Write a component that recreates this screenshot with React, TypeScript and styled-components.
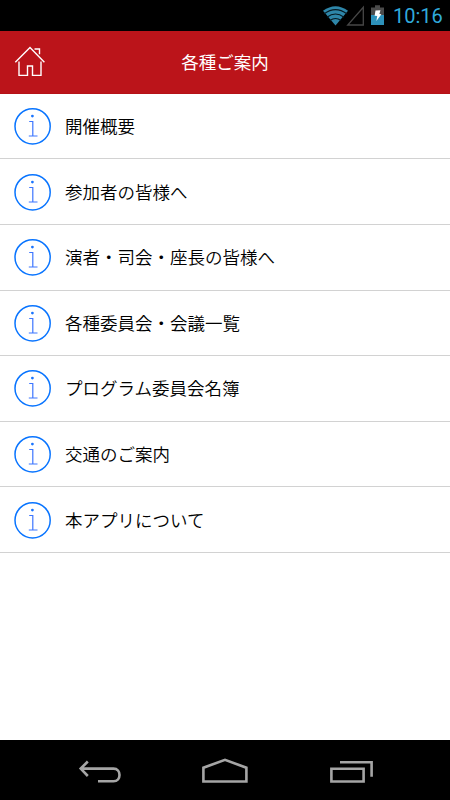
import React from 'react';
import styled, { createGlobalStyle } from 'styled-components';

const GlobalStyle = createGlobalStyle`
  * { box-sizing: border-box; }
  body { margin: 0; background: #fff; }
`;

const Screen = styled.div`
  display: flex;
  flex-direction: column;
  width: 450px;
  height: 800px;
  overflow: hidden;
  background: #fff;
  color: #000;
  font-family: "Noto Sans CJK JP", sans-serif;
`;

const StatusBar = styled.div`
  display: flex;
  flex: none;
  height: 31px;
  justify-content: flex-end;
  padding-right: 7px;
  background: #000;
`;

const Clock = styled.time`
  width: 50px;
  margin-left: 7px;
  padding-top: 1px;
  font: 400 20px/31px Roboto, sans-serif;
  color: #30aadb;
  white-space: nowrap;
`;

const Header = styled.header`
  display: grid;
  grid-template-columns: 60px 1fr 60px;
  align-items: center;
  flex: none;
  height: 62.6px;
  background: #bb141a;
  border-bottom: 1px solid #b51217;
`;

const HomeButton = styled.button`
  display: block;
  width: 60px;
  height: 60px;
  padding: 0;
  border: 0;
  background: none;
`;

const Title = styled.h1`
  margin: 0;
  font-size: 17.5px;
  line-height: 26px;
  font-weight: 400;
  text-align: center;
  color: #fff;
`;

const Menu = styled.ul`
  flex: 1;
  margin: 0;
  padding: 0;
  list-style: none;
`;

const MenuItem = styled.li`
  display: flex;
  align-items: center;
  gap: 14px;
  height: 65.65px;
  padding: 0 14px;
  border-bottom: 1px solid #d2d2d2;
  font-size: 17.5px;
  line-height: 26px;
  font-weight: 350;
`;

const Icon = styled.svg`
  display: block;
  flex: none;
  fill: none;
`;

const NavBar = styled.nav`
  display: grid;
  grid-template-columns: repeat(3, 126px);
  justify-content: center;
  flex: none;
  height: 60px;
  background: #000;
`;

const NavButton = styled.button`
  display: block;
  padding: 0;
  border: 0;
  background: none;
`;

const items = [
  '開催概要',
  '参加者の皆様へ',
  '演者・司会・座長の皆様へ',
  '各種委員会・会議一覧',
  'プログラム委員会名簿',
  '交通のご案内',
  '本アプリについて',
];

const StatusIcons = () => (
  <Icon width="66" height="31" viewBox="320 0 66 31">
    <path d="M323 10.8Q335.5 1.5 348 10.8L335.5 25.5Z" fill="#2e86a9" />
    <path d="M324.2 13.8Q335.5 5.5 346.8 13.8M327 17.2Q335.5 10.8 344 17.2M330 20.5Q335.5 16.4 341 20.5" stroke="#061820" strokeWidth="1.1" />
    <path d="M347.7 25H363.3V7.2Z" stroke="#474747" strokeWidth="1.3" />
    <path d="M371 7.5h4V5.3h5v2.2h4V15h-13Z" fill="#4b4b4b" />
    <path d="M371 15h13v10h-13Z" fill="#2d91ba" />
    <path d="M375.5 10.5l5-.3-1.1 3.7 2 .3-5 6.8.8-5-2.6-.3Z" fill="#fff" />
  </Icon>
);

const InfoIcon = () => (
  <Icon width="37" height="38" viewBox="0 -0.5 37 38">
    <circle cx="18.6" cy="18.8" r="17.6" stroke="#0874ff" strokeWidth="1.5" />
    <circle cx="18.4" cy="8.6" r="1.4" fill="#1874ff" />
    <path d="M15.2 14h3.6v14.5M14.8 28.5h8.7" stroke="#3c76ff" strokeWidth="1.2" />
  </Icon>
);

export default function App() {
  return (
    <Screen>
      <GlobalStyle />
      <StatusBar>
        <StatusIcons />
        <Clock>10:16</Clock>
      </StatusBar>
      <Header>
        <HomeButton aria-label="Home">
          <Icon width="60" height="60" viewBox="0 32 60 60">
            <path d="M15.3 62.2 30 47.6 44.4 62.2M34.5 49h5v5.2M19 61.5v13.9h8.5V66h5v9.4H41V61.5" stroke="#fff" strokeWidth="1.4" />
          </Icon>
        </HomeButton>
        <Title>各種ご案内</Title>
      </Header>
      <Menu>
        {items.map((label) => (
          <MenuItem key={label}>
            <InfoIcon />
            {label}
          </MenuItem>
        ))}
      </Menu>
      <NavBar>
        <NavButton aria-label="Back">
          <Icon width="126" height="60" viewBox="36 740 126 60">
            <path d="M81 768.6h32.5c8 0 8 12.7 0 12.7H98M87.8 761.5 80.7 768.6 87.8 776" stroke="#a5a5a5" strokeWidth="2.6" />
          </Icon>
        </NavButton>
        <NavButton aria-label="Home screen">
          <Icon width="126" height="60" viewBox="162 740 126 60">
            <path d="M203.4 781.5v-13.8l21.6-7.9 21.4 7.9v13.8Z" stroke="#a5a5a5" strokeWidth="2.6" />
          </Icon>
        </NavButton>
        <NavButton aria-label="Recent apps">
          <Icon width="126" height="60" viewBox="288 740 126 60">
            <path d="M331.4 768.7h32.2v12.8h-32.2ZM340 762.3h31.6v14.4" stroke="#a5a5a5" strokeWidth="2.6" />
          </Icon>
        </NavButton>
      </NavBar>
    </Screen>
  );
}
